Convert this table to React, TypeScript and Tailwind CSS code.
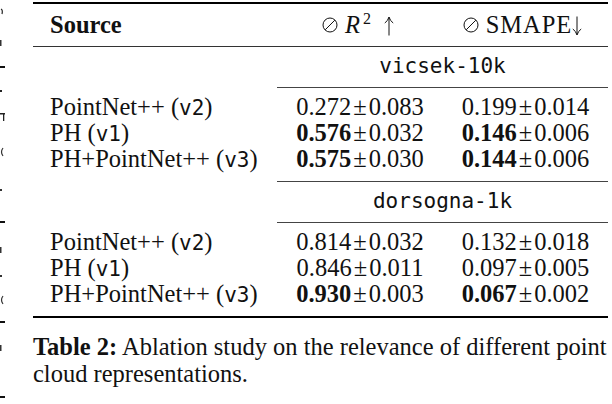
import React from "react";

type Cell = { mean: string; std: string; best?: boolean };
type Row = { label: string; tag: string; r2: Cell; smape: Cell };
type Group = { name: string; rows: Row[] };

const groups: Group[] = [
  {
    name: "vicsek-10k",
    rows: [
      { label: "PointNet++", tag: "v2", r2: { mean: "0.272", std: "0.083" }, smape: { mean: "0.199", std: "0.014" } },
      { label: "PH", tag: "v1", r2: { mean: "0.576", std: "0.032", best: true }, smape: { mean: "0.146", std: "0.006", best: true } },
      { label: "PH+PointNet++", tag: "v3", r2: { mean: "0.575", std: "0.030", best: true }, smape: { mean: "0.144", std: "0.006", best: true } },
    ],
  },
  {
    name: "dorsogna-1k",
    rows: [
      { label: "PointNet++", tag: "v2", r2: { mean: "0.814", std: "0.032" }, smape: { mean: "0.132", std: "0.018" } },
      { label: "PH", tag: "v1", r2: { mean: "0.846", std: "0.011" }, smape: { mean: "0.097", std: "0.005" } },
      { label: "PH+PointNet++", tag: "v3", r2: { mean: "0.930", std: "0.003", best: true }, smape: { mean: "0.067", std: "0.002", best: true } },
    ],
  },
];

// thin circle with a slash (\oslash)
const Oslash = () => (
  <svg width="16" height="16" viewBox="0 0 16 16" className="inline-block mr-[7px] -mt-[4px] align-middle">
    <circle cx="8" cy="8" r="7" fill="none" stroke="#111" strokeWidth="1" />
    <line x1="3.2" y1="12.8" x2="12.8" y2="3.2" stroke="#111" strokeWidth="1" />
  </svg>
);

// math arrows (\uparrow, \downarrow)
const Arrow = ({ down = false }: { down?: boolean }) => (
  <svg
    width="10"
    height="20"
    viewBox="0 0 10 20"
    className={`inline-block align-middle -mt-[2px] ${down ? "rotate-180" : ""}`}
  >
    <line x1="5" y1="1.5" x2="5" y2="19.5" stroke="#111" strokeWidth="1" />
    <path d="M0.8 7 Q3.8 5 5 1 Q6.2 5 9.2 7" stroke="#111" strokeWidth="1" fill="none" />
  </svg>
);

// clipped fragments of the neighbouring column on the left edge
const EdgeMarks = () => (
  <svg width="6" height="404" className="shrink-0">
    <path d="M1 9 q2 1 1 5" stroke="#222" strokeWidth="1.2" fill="none" />
    <rect x="0" y="40" width="1.5" height="6" fill="#333" />
    <rect x="0" y="66" width="5" height="2" fill="#111" />
    <rect x="0" y="90" width="2" height="2" fill="#222" />
    <rect x="0" y="113" width="5" height="1.5" fill="#222" />
    <rect x="3" y="113" width="1.3" height="8" fill="#222" />
    <path d="M3 148 q-3 4 0 8" stroke="#333" strokeWidth="1.2" fill="none" />
    <rect x="0" y="189" width="2" height="2" fill="#333" />
    <rect x="0" y="221" width="5" height="2" fill="#111" />
    <rect x="0" y="247" width="1.5" height="6" fill="#333" />
    <rect x="0" y="275" width="2" height="2" fill="#333" />
    <path d="M3 296 q-3 4 0 8" stroke="#333" strokeWidth="1.2" fill="none" />
    <rect x="0" y="321" width="5" height="2" fill="#111" />
    <rect x="0" y="345" width="1.5" height="6" fill="#333" />
    <rect x="0" y="396" width="5" height="2" fill="#111" />
  </svg>
);

const Value = ({ cell }: { cell: Cell }) => (
  <span className="whitespace-nowrap">
    <span className={cell.best ? "font-bold" : ""}>{cell.mean}</span>
    <span className="mx-[2px]">±</span>
    {cell.std}
  </span>
);

export default function App() {
  return (
    <div className="flex w-[612px] h-[404px] overflow-hidden bg-white text-[#111] font-['Liberation_Serif','Times_New_Roman',serif]">
      <EdgeMarks />
      <div className="ml-[27px] pt-[2px] w-[575px] flex flex-col">
        {/* top rule */}
        <div className="h-[2px] bg-black" />

        {/* header */}
        <div className="grid grid-cols-[244px_166px_165px] h-[42px] items-center text-[24.5px] leading-[28px]">
          <div className="pl-[17px] font-bold">Source</div>
          <div className="text-center whitespace-nowrap pr-[4px]">
            <Oslash />
            <span className="italic">R</span>
            <sup className="text-[16px] -top-[9px] ml-[3px]">2</sup>
            <span className="ml-[13px]">
              <Arrow />
            </span>
          </div>
          <div className="text-center whitespace-nowrap pr-[6px]">
            <Oslash />
            <span className="tracking-[1px]">SMAPE</span>
            <Arrow down />
          </div>
        </div>
        <div className="h-px bg-[#333]" />

        {groups.map((g, gi) => (
          <div key={g.name} className="flex flex-col">
            <div className="grid grid-cols-[244px_331px] h-[40px] items-center">
              <div />
              <div className="text-center text-[21px] font-['DejaVu_Sans_Mono',monospace]">{g.name}</div>
            </div>
            <div className="h-px bg-[#444] ml-[244px]" />
            <div className="pt-[6px] pb-[9px] flex flex-col text-[24.5px] leading-[26px]">
              {g.rows.map((r) => (
                <div key={r.label} className="grid grid-cols-[244px_166px_165px] h-[26px]">
                  <div className="pl-[17px] whitespace-nowrap">
                    {r.label} (<span className="text-[21px] font-['DejaVu_Sans_Mono',monospace]">{r.tag}</span>)
                  </div>
                  <div className="text-center">
                    <Value cell={r.r2} />
                  </div>
                  <div className="text-center">
                    <Value cell={r.smape} />
                  </div>
                </div>
              ))}
            </div>
            {gi === 0 ? <div className="h-px bg-[#444] ml-[244px]" /> : <div className="h-[2px] bg-black" />}
          </div>
        ))}

        {/* caption */}
        <p className="mt-[15px] text-[24.5px] leading-[27px] whitespace-nowrap">
          <span className="font-bold">Table 2:</span> Ablation study on the relevance of different point
          <br />
          cloud representations.
        </p>
      </div>
    </div>
  );
}
